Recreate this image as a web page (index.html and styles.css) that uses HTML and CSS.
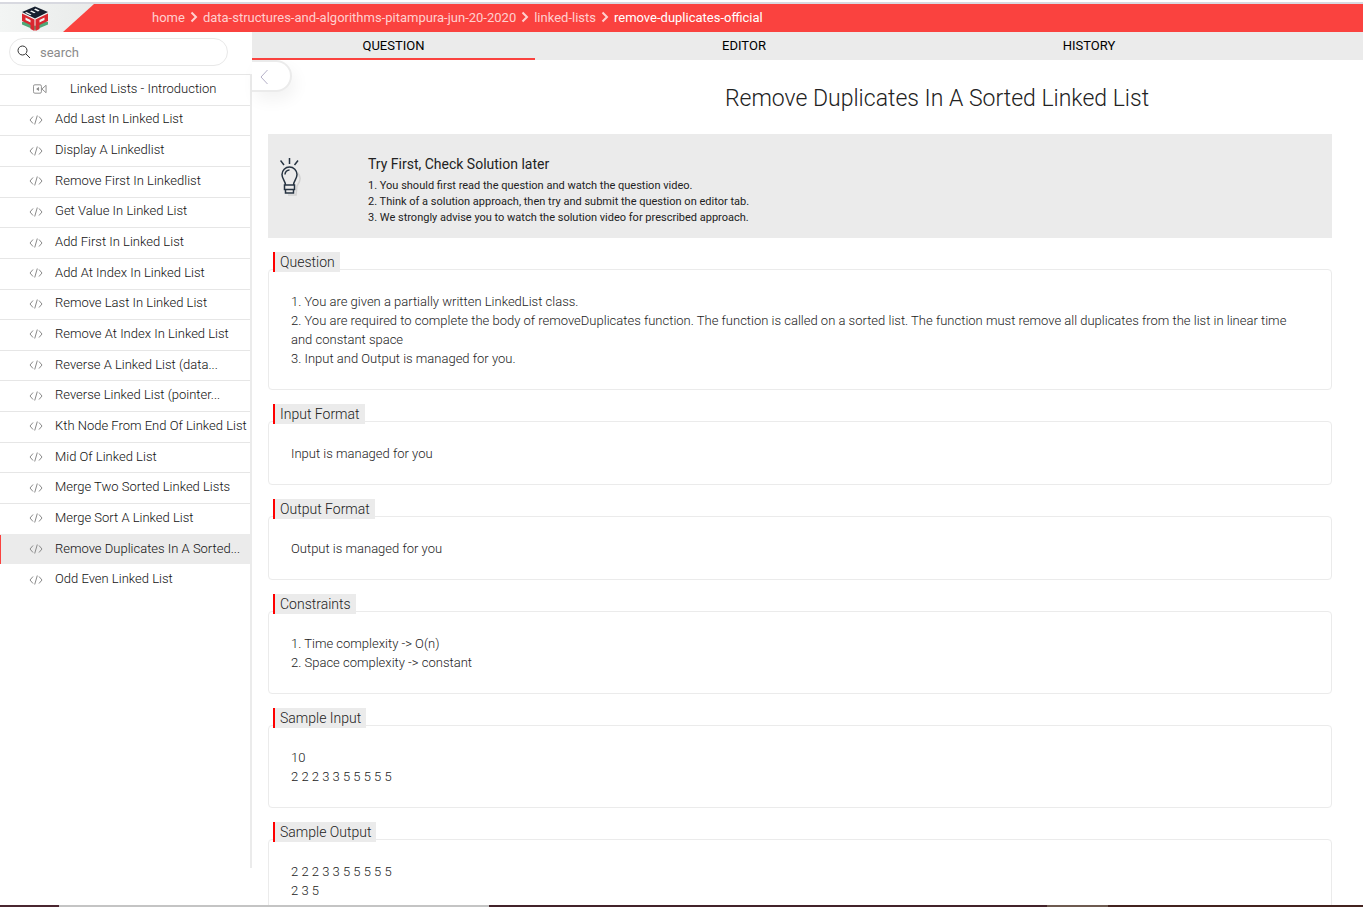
FILE: index.html
```html
<!DOCTYPE html>
<html lang="en">
<head>
<meta charset="utf-8">
<title>Remove Duplicates In A Sorted Linked List</title>
<link rel="stylesheet" href="styles.css">
</head>
<body>
<svg class="defs" aria-hidden="true">
  <symbol id="code" viewBox="0 0 14 10"><path d="M4 1.500 1 5l3 3.500M10 1.500 13 5l-3 3.500M8.300.5 5.700 9.500"/></symbol>
  <symbol id="sep" viewBox="0 0 8 12"><path d="M1.500 1.500 6 6l-4.500 4.500"/></symbol>
</svg>
<header class="topbar">
  <a class="brand" href="#" aria-label="Home">
    <svg class="logo" viewBox="0 0 28 25">
      <path fill="#4fa878" d="M1 16l5-1 8 5 8-5 5 1v2.500L14 24 1 18.500z"/>
      <path fill="#17202f" d="M14 .5 27 6 14 12.500 1 6z"/>
      <path fill="#f2f4f4" d="M9 5.300l1.600-.8 4 2-1.600.8zM13 3.400l1.600-.8 4 2-1.600.8zM4 6.800l1.500-.7 5 2.500-1.300.7z"/>
      <path fill="#d9272f" fill-rule="evenodd" d="M1 7.500l12.500 6V25L9.500 23v-4L1 15zM4.500 11.500v2.500l5 2.400v-2.500z"/>
      <path fill="#d9272f" fill-rule="evenodd" d="M27 7.500l-12.500 6V25l4-2v-4L27 15zM23.500 11.500v2.500l-5 2.400v-2.500z"/>
    </svg>
  </a>
  <nav class="crumbs" aria-label="Breadcrumb">
    <a href="#">home</a><svg class="sep"><use href="#sep"/></svg>
    <a href="#">data-structures-and-algorithms-pitampura-jun-20-2020</a><svg class="sep"><use href="#sep"/></svg>
    <a href="#">linked-lists</a><svg class="sep"><use href="#sep"/></svg>
    <a href="#" class="current">remove-duplicates-official</a>
  </nav>
</header>
<div class="layout">
  <aside class="sidebar">
    <label class="search">
      <svg viewBox="0 0 14 14"><circle cx="5.500" cy="5.500" r="4.500"/><path d="M9 9l4 4"/></svg>
      <input type="text" placeholder="search" aria-label="search">
    </label>
    <ul class="lessons">
      <li><a href="#" class="video"><svg viewBox="0 0 15 10"><rect x=".5" y=".5" width="8.500" height="9" rx="1.500"/><path d="M9.500 5l4.500-4v8z"/><path fill="currentColor" d="M6 3.500v3L4 5z"/></svg><span>Linked Lists - Introduction</span></a></li>
      <li><a href="#"><svg><use href="#code"/></svg><span>Add Last In Linked List</span></a></li>
      <li><a href="#"><svg><use href="#code"/></svg><span>Display A Linkedlist</span></a></li>
      <li><a href="#"><svg><use href="#code"/></svg><span>Remove First In Linkedlist</span></a></li>
      <li><a href="#"><svg><use href="#code"/></svg><span>Get Value In Linked List</span></a></li>
      <li><a href="#"><svg><use href="#code"/></svg><span>Add First In Linked List</span></a></li>
      <li><a href="#"><svg><use href="#code"/></svg><span>Add At Index In Linked List</span></a></li>
      <li><a href="#"><svg><use href="#code"/></svg><span>Remove Last In Linked List</span></a></li>
      <li><a href="#"><svg><use href="#code"/></svg><span>Remove At Index In Linked List</span></a></li>
      <li><a href="#"><svg><use href="#code"/></svg><span>Reverse A Linked List (data...</span></a></li>
      <li><a href="#"><svg><use href="#code"/></svg><span>Reverse Linked List (pointer...</span></a></li>
      <li><a href="#"><svg><use href="#code"/></svg><span>Kth Node From End Of Linked List</span></a></li>
      <li><a href="#"><svg><use href="#code"/></svg><span>Mid Of Linked List</span></a></li>
      <li><a href="#"><svg><use href="#code"/></svg><span>Merge Two Sorted Linked Lists</span></a></li>
      <li><a href="#"><svg><use href="#code"/></svg><span>Merge Sort A Linked List</span></a></li>
      <li class="active"><a href="#"><svg><use href="#code"/></svg><span>Remove Duplicates In A Sorted...</span></a></li>
      <li><a href="#"><svg><use href="#code"/></svg><span>Odd Even Linked List</span></a></li>
    </ul>
  </aside>
  <main class="main">
    <nav class="tabs">
      <a href="#" class="selected">QUESTION</a>
      <a href="#">EDITOR</a>
      <a href="#">HISTORY</a>
    </nav>
    <button class="collapse" aria-label="Collapse sidebar"><svg viewBox="0 0 8 16"><path d="M7.500 1 1 8l6.500 7"/></svg></button>
    <div class="content">
      <h1>Remove Duplicates In A Sorted Linked List</h1>
      <section class="tip">
        <svg class="bulb" viewBox="0 0 22 40">
          <path class="shade" d="M17 14c4 4 4 9 0 14l-1 9H8"/>
          <path d="M5.500 27c0-4-3.500-6-3.500-10.500a7.500 7.500 0 0 1 15 0c0 4.500-3.500 6.500-3.500 10.500M4.500 27h10v4.500h-10zM5.500 31.500V35h8v-3.500M5 16.500a4.500 4.500 0 0 1 4.500-4.500M.5 2.500 4 7M9.500 0v6M18 2.500 14.500 7"/>
        </svg>
        <div>
          <h2>Try First, Check Solution later</h2>
          <p>1. You should first read the question and watch the question video.<br>2. Think of a solution approach, then try and submit the question on editor tab.<br>3. We strongly advise you to watch the solution video for prescribed approach.</p>
        </div>
      </section>
      <section class="block"><h3>Question</h3>
        <div class="box">1. You are given a partially written LinkedList class.<br>2. You are required to complete the body of removeDuplicates function. The function is called on a sorted list. The function must remove all duplicates from the list in linear time and constant space<br>3. Input and Output is managed for you.</div></section>
      <section class="block"><h3>Input Format</h3><div class="box">Input is managed for you</div></section>
      <section class="block"><h3>Output Format</h3><div class="box">Output is managed for you</div></section>
      <section class="block"><h3>Constraints</h3><div class="box">1. Time complexity -&gt; O(n)<br>2. Space complexity -&gt; constant</div></section>
      <section class="block"><h3>Sample Input</h3><div class="box">10<br>2 2 2 3 3 5 5 5 5 5</div></section>
      <section class="block"><h3>Sample Output</h3><div class="box">2 2 2 3 3 5 5 5 5 5<br>2 3 5</div></section>
    </div>
  </main>
</div>
<div class="edge"></div>
</body>
</html>
```
FILE: styles.css
```css
* { box-sizing: border-box; }
body {
  margin: 0;
  height: 100vh;
  overflow: hidden;
  display: flex;
  flex-direction: column;
  background: #fff;
  color: #222;
  font: 300 13px/19px Roboto, "Liberation Sans", sans-serif;
}
a { color: inherit; text-decoration: none; }
svg { fill: none; stroke: currentColor; flex: none; }
h1, h2, h3, p, ul { margin: 0; padding: 0; font-weight: 300; }
.defs { position: absolute; width: 0; height: 0; }

.topbar {
  flex: none;
  display: flex;
  height: 32px;
  border-top: 2px solid #fff;
  background: #fa423f;
  box-shadow: inset 0 2px #d8d9e0;
}
.brand {
  width: 94px;
  padding: 4px 0 0 21px;
  background: linear-gradient(90deg, #f3f5f4, #e9ebea);
  clip-path: polygon(0 2px, 100% 2px, 63px 100%, 0 100%);
}
.logo { display: block; width: 28px; height: 25px; stroke: none; }
.crumbs {
  display: flex;
  align-items: center;
  gap: 5px;
  padding-left: 58px;
  color: #ffd0cf;
  font-weight: 400;
}
.crumbs .current { color: #fff; }
.sep { width: 8px; height: 12px; stroke-width: 2; }

.layout { flex: 1; min-height: 0; display: flex; }
.sidebar {
  flex: none;
  width: 252px;
  margin-bottom: 39px;
}
.search {
  display: flex;
  align-items: center;
  gap: 9px;
  width: 219px;
  height: 28px;
  margin: 6px 0 8px 9px;
  padding: 0 7px;
  border: 1px solid #e8e8e8;
  border-radius: 14px;
  color: #333;
}
.search svg { width: 14px; height: 14px; }
.search input {
  min-width: 0;
  flex: 1;
  padding: 0;
  border: 0;
  outline: 0;
  background: none;
  font: 400 13px/19px Roboto, "Liberation Sans", sans-serif;
}
.search input::placeholder { color: #8b8b8b; }
.lessons {
  list-style: none;
  display: grid;
  grid-template-rows: repeat(17, 1fr);
  height: calc(100% - 42px);
  padding-bottom: 273px;
  border-right: 2px solid #ebebeb;
}
.lessons li { border-top: 1px solid #e6e6e6; }
.lessons li:last-child { border-color: transparent; }
.lessons a {
  display: flex;
  align-items: center;
  gap: 12px;
  height: 100%;
  padding: 0 0 3px 29px;
  white-space: nowrap;
  color: #111;
}
.lessons svg { width: 14px; height: 10px; margin-top: 2px; color: #8a8a8a; }
.lessons .video { gap: 23px; padding-left: 33px; }
.lessons .active {
  margin-right: -2px;
  border-color: #ebebeb;
  background: #ebebeb;
  box-shadow: inset 1px 0 #fa423f;
}

.main { position: relative; flex: 1; min-width: 0; }
.tabs {
  display: grid;
  grid-template-columns: 283fr 418fr 272fr 138fr;
  height: 28px;
  background: #ebebeb;
  color: #000;
  font-weight: 400;
  text-align: center;
}
.tabs a { padding-top: 4px; }
.tabs .selected { border-bottom: 2px solid #fa423f; }
.collapse {
  position: absolute;
  top: 28px;
  left: 0;
  width: 40px;
  height: 32px;
  padding: 2px 0 0 8px;
  border: 2px solid #ebebeb;
  border-left: 0;
  border-radius: 0 16px 16px 0;
  background: #fff;
  box-shadow: 4px 8px 16px #0000000d;
  color: #b4b0c8;
  text-align: left;
}
.collapse svg { display: block; width: 8px; height: 16px; }
.content { padding: 24px 31px 0 16px; }
h1 { padding-left: 274px; font-size: 23px; line-height: 30px; text-align: center; }
.tip {
  display: flex;
  gap: 66px;
  margin-top: 20px;
  padding: 20px 12px;
  padding-bottom: 12px;
  background: #ebebeb;
}
.tip h2 { font-size: 14px; line-height: 20px; font-weight: 400; }
.tip p { margin-top: 4px; font-size: 11px; line-height: 16px; font-weight: 400; }
.bulb { width: 22px; height: 40px; margin-top: 4px; color: #263341; stroke-width: 1.500; }
.bulb .shade { stroke: #d2d2d2; }
.block { margin-top: 14px; }
.block h3 {
  position: relative;
  z-index: 1;
  width: fit-content;
  height: 20px;
  margin: 0 0 -3px 5px;
  padding: 0 5px;
  border-left: 2px solid #f00;
  background: #ebebeb;
  font-size: 14px;
  line-height: 20px;
}
.box { padding: 22px 22px 21px; border: 1px solid #ebebeb; border-radius: 4px; }
.edge {
  position: absolute;
  inset: auto 0 0;
  height: 2px;
  background: linear-gradient(90deg, #4a2630 59px, #c4c4c4 59px 489px, #43232a 489px 1047px, #6d5a50 1047px 1108px, #43231f 1108px);
}
```
